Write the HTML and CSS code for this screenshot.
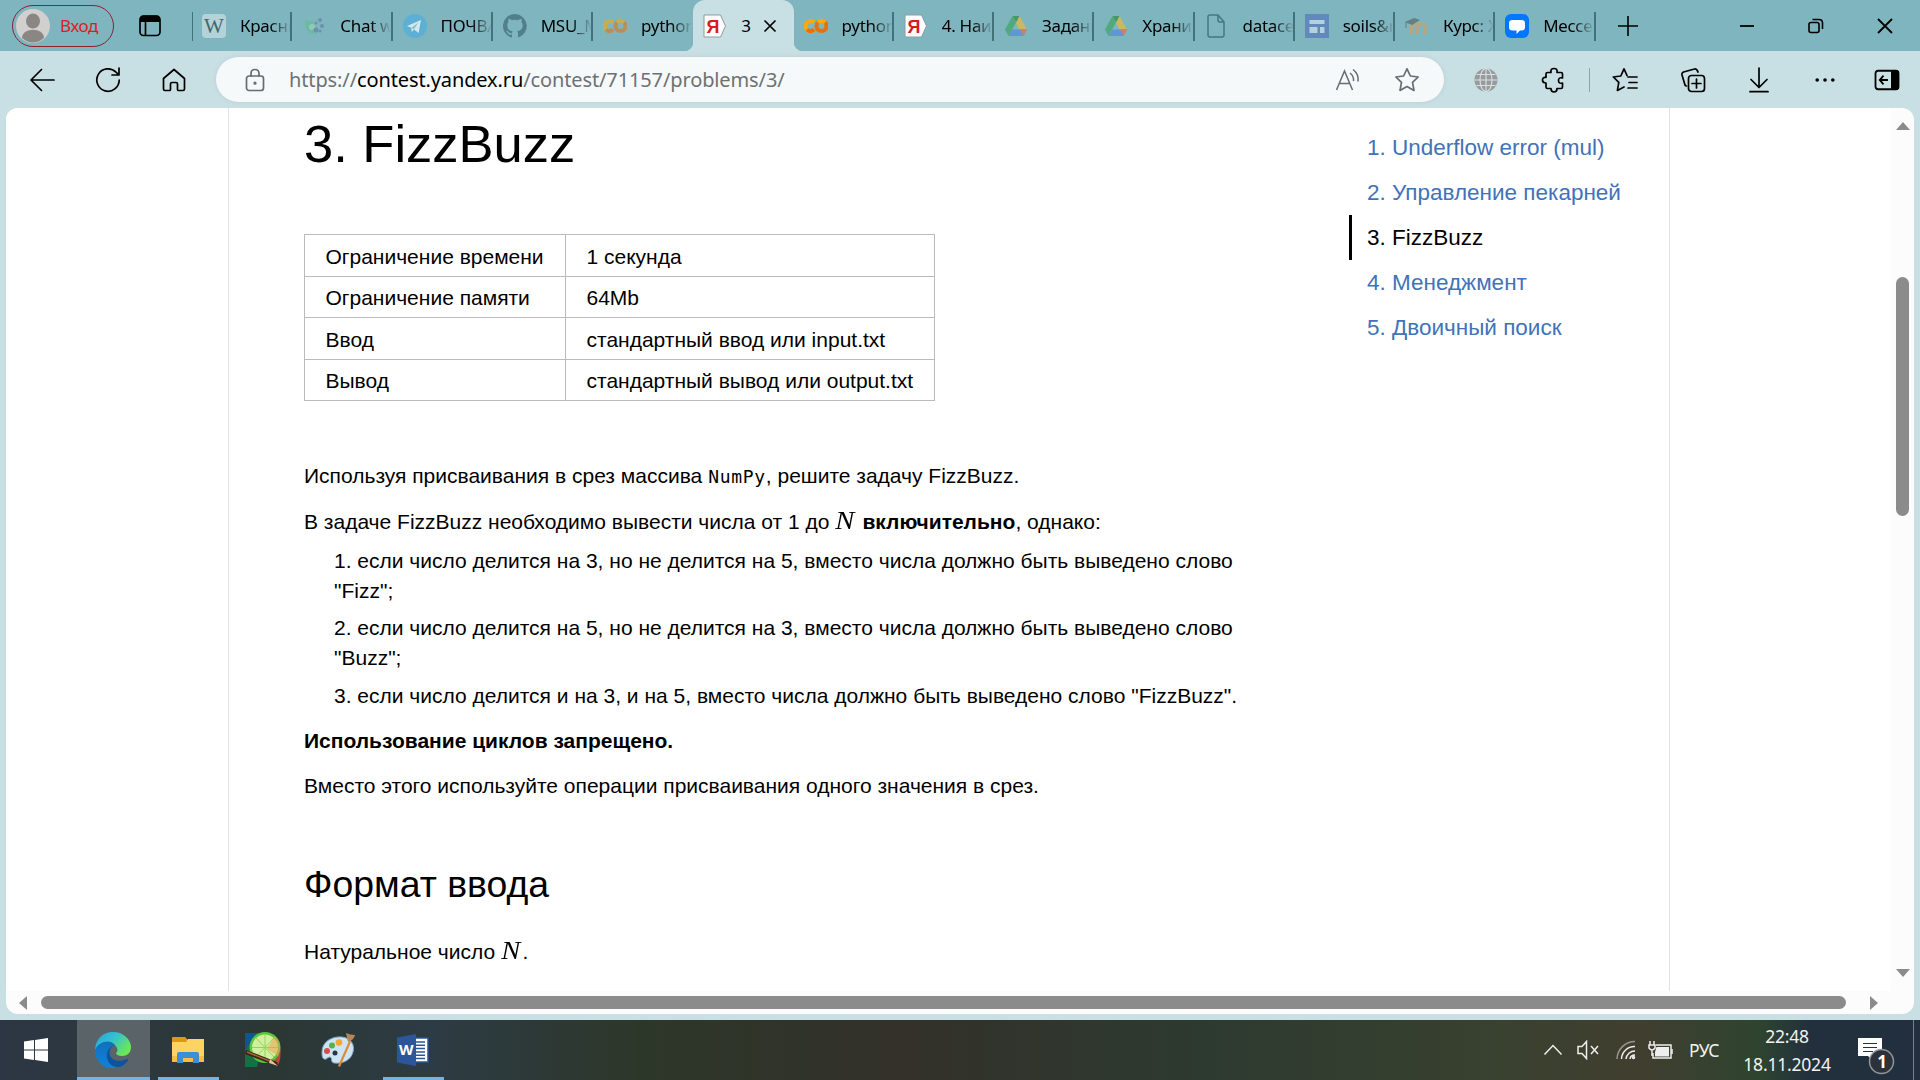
FILE: index.html
```html
<!DOCTYPE html>
<html lang="ru">
<head>
<meta charset="utf-8">
<title>3. FizzBuzz</title>
<link rel="stylesheet" href="styles.css">
</head>
<body>
<svg class="defs" width="0" height="0">
  <symbol id="colab" viewBox="0 0 24 24"><g fill="none" stroke-width="4.2"><circle cx="17.5" cy="12" r="5" stroke="#e8710a"/><path d="M10 8.2A5 5 0 1 0 10 15.8" stroke="#f9ab00"/><path d="M14 8.4a5 5 0 0 1 7 0" stroke="#f9ab00"/><path d="M3 15.6a5 5 0 0 0 7 0" stroke="#e8710a"/></g></symbol>
  <symbol id="ya" viewBox="0 0 24 24"><path d="M1 1h16.5l5 11-5 11H1z" fill="#fff" stroke="#8b9ca1"/></symbol>
  <symbol id="drive" viewBox="0 0 24 24"><path d="M8.5 2 1 15.5 4.5 22 12 8.500z" fill="#4aa773"/><path d="M8.500 2h7l7.500 13.500h-7.500z" fill="#d9b951"/><path d="M4.500 22h15L23 15.500H8.200z" fill="#5b90dc"/><path d="M19.500 22 23 15.500h-7z" fill="#d67761"/><path d="M8.500 2h7L12 8.500z" fill="#3c9261"/></symbol>
</svg>
<div class="browser">
  <header class="tabstrip">
    <div class="profile">
      <svg width="34" height="34" viewBox="0 0 34 34"><circle cx="17" cy="17" r="17" fill="#d2d0ce"/><ellipse cx="17" cy="12" rx="7" ry="7.500" fill="#8a8684"/><path d="M6 29c0-11 22-11 22 0q-11 9-22 0z" fill="#8a8684"/></svg>
      <span>Вход</span>
    </div>
    <svg class="workspace" width="24" height="24" viewBox="0 0 24 24"><rect x="2" y="2" width="20" height="19.500" rx="3.500" fill="none" stroke="#000" stroke-width="1.700"/><path d="M2 8V5q0-3.500 3.500-3.500h13Q22 1.500 22 5v3z"/><path d="M7.500 8v13" stroke="#000" stroke-width="1.700"/></svg>
    <nav class="tabs">
      <div class="tab"><svg class="ico" viewBox="0 0 24 24"><rect width="24" height="24" rx="4" fill="#b3d3d8"/><text x="12" y="19" text-anchor="middle" class="wiki">W</text></svg><span class="label">Красный</span></div>
      <div class="tab"><svg class="ico faded" viewBox="0 0 24 24"><path d="M3 5q2 2 6 2 4 1 4 6-1 6 3 6-8 3-11-3Q2 10 3 5z" fill="#5cc08c"/><circle cx="10" cy="13" r="3" fill="#a5d8b0"/><g fill="#5a77a0"><circle cx="18" cy="6" r="2"/><circle cx="20" cy="12" r="2"/><circle cx="14" cy="16" r="2.500"/><circle cx="14" cy="9" r="1.500"/><circle cx="18" cy="17" r="1.500"/></g></svg><span class="label">Chat with</span></div>
      <div class="tab"><svg class="ico" viewBox="0 0 24 24"><circle cx="12" cy="12" r="12" fill="#5bb0d4"/><path d="m4 12 14-6-2.400 13-4.600-3.600L8.700 18l-.5-4.200z" fill="#d3e7ec"/><path d="m8.300 14 7-5.500-4.300 6.700z" fill="#8ebdcc"/></svg><span class="label">ПОЧВА</span></div>
      <div class="tab"><svg class="ico" viewBox="0 0 16 16"><path fill="#52808a" d="M8 0a8 8 0 0 0-2.500 15.600c.4.1.5-.2.500-.4v-1.500c-2.200.5-2.700-.9-2.700-.9-.4-.9-.9-1.200-.9-1.200-.7-.5.1-.5.1-.5.800.1 1.200.8 1.200.8.700 1.200 1.900.9 2.300.7.1-.5.300-.9.500-1.100-1.800-.2-3.600-.9-3.600-4 0-.9.300-1.600.8-2.100-.1-.2-.4-1 .1-2.100 0 0 .7-.2 2.200.8a7.700 7.700 0 0 1 4 0c1.500-1 2.200-.8 2.200-.8.400 1.100.2 1.900.1 2.100.5.600.8 1.300.8 2.100 0 3.100-1.900 3.700-3.700 3.900.3.300.6.800.6 1.500v2.200c0 .2.100.5.600.4A8 8 0 0 0 8 0"/></svg><span class="label">MSU_ML</span></div>
      <div class="tab before"><svg class="ico faded"><use href="#colab"/></svg><span class="label">python</span></div>
      <div class="tab active"><svg class="ico" viewBox="0 0 24 24"><use href="#ya"/><text x="10" y="18.500" text-anchor="middle" class="ya">Я</text></svg><span class="label">3</span><svg class="close" width="14" height="14" viewBox="0 0 14 14"><path d="m1.500 1.500 11 11m0-11-11 11" stroke="#000" stroke-width="1.700"/></svg></div>
      <div class="tab"><svg class="ico"><use href="#colab"/></svg><span class="label">python</span></div>
      <div class="tab"><svg class="ico" viewBox="0 0 24 24"><use href="#ya"/><text x="10" y="18.500" text-anchor="middle" class="ya">Я</text></svg><span class="label">4. Наибол</span></div>
      <div class="tab"><svg class="ico soft"><use href="#drive"/></svg><span class="label">Задания</span></div>
      <div class="tab"><svg class="ico soft"><use href="#drive"/></svg><span class="label">Хранили</span></div>
      <div class="tab"><svg class="ico" viewBox="0 0 24 24"><path d="M3 3q0-2 2-2h8l6 7v13q0 2-2 2H5q-2 0-2-2zM13 1v5q0 2 2 2h4" fill="none" stroke="#47777f" stroke-width="1.500"/></svg><span class="label">datacent</span></div>
      <div class="tab"><svg class="ico" viewBox="0 0 24 24"><path d="M0 0h24v24H0z" fill="#6189be"/><path d="M4.500 6h15v4h-15zm0 7h8v6h-8zm10.500 0h4.500v6H15z" fill="#b5d2dc"/></svg><span class="label">soils&amp;mo</span></div>
      <div class="tab"><svg class="ico faded" viewBox="0 0 24 24"><path d="M6 20v-7q0-3 3-3t3 3v7m0-7q0-3 4-3t4 3v7" fill="none" stroke="#e39b4e" stroke-width="3.500"/><path d="m0 8 9-4 6 2-8 5z" fill="#4b5557"/><path d="M1 8v6" stroke="#4b5557"/></svg><span class="label">Курс: Хи</span></div>
      <div class="tab"><svg class="ico" viewBox="0 0 24 24"><rect width="24" height="24" rx="6" fill="#07f"/><path d="M7.500 6h9Q20 6 20 9v4.500q0 3-3.500 3H15L11.500 20v-3.500h-4q-3.500 0-3.500-3V9q0-3 3.500-3z" fill="#fff"/></svg><span class="label">Мессенд</span></div>
    </nav>
    <svg class="plus" width="20" height="20" viewBox="0 0 20 20"><path d="M10 0v20M0 10h20" stroke="#000" stroke-width="1.600"/></svg>
    <div class="winctl">
      <svg width="16" height="16" viewBox="0 0 16 16"><path d="M1 8h14" stroke="#000" stroke-width="1.800"/></svg>
      <svg width="16" height="16" viewBox="0 0 16 16" fill="none" stroke="#000" stroke-width="1.600"><rect x="1" y="4.500" width="10" height="10" rx="2"/><path d="M4.500 1.500H11Q14.500 1.500 14.500 5v6"/></svg>
      <svg width="16" height="16" viewBox="0 0 16 16"><path d="m1 1 14 14m0-14L1 15" stroke="#000" stroke-width="1.800"/></svg>
    </div>
  </header>
  <div class="toolbar">
    <div class="slot"><svg width="26" height="24" viewBox="0 0 26 24" class="line"><path d="M25 12H2M12.500 1.500 2 12l10.500 10.500"/></svg></div>
    <div class="slot"><svg width="26" height="26" viewBox="0 0 26 26" class="line"><path d="M24.200 13A11.200 11.200 0 1 1 21 5.200l2.500 2.300M24 1v7h-7"/></svg></div>
    <div class="slot"><svg width="24" height="24" viewBox="0 0 24 24" class="line"><path d="M1.500 10.500 12 1.500l10.500 9V21q0 1.500-1.500 1.500h-4.500q-1 0-1-1V16q0-1.500-1.500-1.500h-4Q8.500 14.500 8.500 16v5.500q0 1-1 1H3q-1.500 0-1.500-1.500z"/></svg></div>
    <div class="address">
      <svg width="20" height="24" viewBox="0 0 20 24" class="line grey"><rect x="1.500" y="8" width="17" height="14.500" rx="2.500"/><path d="M6 8V5.500q0-4 4-4t4 4V8"/><circle cx="10" cy="15.200" r=".8"/></svg>
      <span class="url">https://<b>contest.yandex.ru</b>/contest/71157/problems/3/</span>
      <svg class="read" width="26" height="24" viewBox="0 0 26 24"><path d="M1.500 22 9.500 3l8 19M4.500 15.500h10M15 5q4 3 3.500 8M18 1.500q6 4.500 5 12" fill="none" stroke="#676c6e" stroke-width="1.500"/></svg>
      <svg class="line grey" width="26" height="26" viewBox="0 0 26 26"><path d="m13 1.800 3.400 7.200 7.800 1-5.700 5.400 1.500 8-7-3.900-7 3.900 1.500-8L1.800 10l7.800-1z"/></svg>
    </div>
    <div class="slot"><svg width="24" height="24" viewBox="0 0 24 24"><circle cx="12" cy="12" r="11.500" fill="#989a9b"/><g fill="none" stroke="#d7e2e4" stroke-width="1.100"><ellipse cx="12" cy="12" rx="6" ry="11.500"/><path d="M12 .5v23M.5 12h23M2.500 6.500h19M2.500 17.500h19"/></g></svg></div>
    <div class="slot wide"><svg width="26" height="26" viewBox="0 0 26 26" class="line"><path d="M5 7q0-1.500 1.500-1.500H10q-.8-4 3-4t3 4h4q1.500 0 1.500 1.500v4q-4-1-4 2.500t4 2.500V20q0 1.500-1.500 1.500h-4q0 3.500-3 3.500t-3-3.500H6.500Q5 21.500 5 20v-4q-3.500 0-3.500-3T5 10.500z"/></svg></div>
    <i class="sep"></i>
    <div class="slot wide"><svg width="26" height="26" viewBox="0 0 26 26" class="line"><path d="M15 8.500 12 1.800 8.800 9l-7.500 1 5.500 5.400-1.400 8L12 20M16 10h9M17 15.500h8M16 21h9"/></svg></div>
    <div class="slot"><svg width="26" height="26" viewBox="0 0 26 26" class="line"><rect x="8.500" y="8.500" width="16" height="16" rx="3"/><path d="M16.500 12v9M12 16.500h9M18 5 17 3Q16 1.500 14.500 2L3.500 5Q1.500 6 2 8l3 10q.5 1 1.500 1"/></svg></div>
    <div class="slot"><svg width="20" height="26" viewBox="0 0 20 26" class="line"><path d="M10 1v19M2 12.500l8 8 8-8M1 24.700h18"/></svg></div>
    <div class="slot"><svg width="20" height="6" viewBox="0 0 20 6"><circle cx="2.200" cy="3" r="1.800"/><circle cx="10" cy="3" r="1.800"/><circle cx="17.800" cy="3" r="1.800"/></svg></div>
    <div class="slot last"><svg width="26" height="22" viewBox="0 0 26 20" preserveAspectRatio="none"><rect x="1.500" y="1.500" width="23" height="17" rx="2.500" fill="none" stroke="#000" stroke-width="1.800"/><path d="M17 1h5q3 0 3 3v12q0 3-3 3h-5z"/><path d="M14 10H6m3.500-4L5.800 10l3.700 4" fill="none" stroke="#000" stroke-width="1.800"/></svg></div>
  </div>
  <div class="view">
    <div class="viewport">
      <div class="page">
        <article class="problem">
          <h1>3. FizzBuzz</h1>
          <table class="limits">
            <tr><td>Ограничение времени</td><td>1 секунда</td></tr>
            <tr><td>Ограничение памяти</td><td>64Mb</td></tr>
            <tr><td>Ввод</td><td>стандартный ввод или input.txt</td></tr>
            <tr><td>Вывод</td><td>стандартный вывод или output.txt</td></tr>
          </table>
          <p>Используя присваивания в срез массива <code>NumPy</code>, решите задачу FizzBuzz.</p>
          <p>В задаче FizzBuzz необходимо вывести числа от 1 до <var>N</var> <strong>включительно</strong>, однако:</p>
          <ol>
            <li>1. если число делится на 3, но не делится на 5, вместо числа должно быть выведено слово<br>"Fizz";</li>
            <li>2. если число делится на 5, но не делится на 3, вместо числа должно быть выведено слово<br>"Buzz";</li>
            <li>3. если число делится и на 3, и на 5, вместо числа должно быть выведено слово "FizzBuzz".</li>
          </ol>
          <p><strong>Использование циклов запрещено.</strong></p>
          <p>Вместо этого используйте операции присваивания одного значения в срез.</p>
          <h2>Формат ввода</h2>
          <p>Натуральное число <var>N</var>.</p>
        </article>
        <aside class="problems">
          <a>1. Underflow error (mul)</a>
          <a>2. Управление пекарней</a>
          <a class="current">3. FizzBuzz</a>
          <a>4. Менеджмент</a>
          <a>5. Двоичный поиск</a>
        </aside>
      </div>
    </div>
    <div class="vbar"><i class="up"></i><i class="vthumb"></i><i class="down"></i></div>
    <div class="hbar"><i class="left"></i><i class="hthumb"></i><i class="right"></i></div>
  </div>
</div>
<footer class="taskbar">
  <div class="task start"><svg width="24" height="24" viewBox="0 0 24 24"><path d="m0 3.500 10-1.400v9.400H0zM11 2l13-2v11.500H11zM0 12.500h10v9.400L0 20.500zM11 12.500h13V24l-13-2z" fill="#fff"/></svg></div>
  <div class="task open focus"><svg width="36" height="36" viewBox="0 0 36 36"><defs><linearGradient id="eg" x1="0" y1="0" x2="1" y2=".6"><stop offset="0" stop-color="#2b9fe0"/><stop offset=".5" stop-color="#35c1cf"/><stop offset="1" stop-color="#6bea52"/></linearGradient><linearGradient id="eb" x1="0" y1="0" x2="0" y2="1"><stop offset="0" stop-color="#1070bc"/><stop offset="1" stop-color="#0f82dc"/></linearGradient></defs><path d="M0 19C0 7 8 0 18 0c11 0 18 8 18 15 0 6-4 9-9 9-4 0-6-1.500-6-3 1.500-1 2-3 1-5-4-8-17-8-22 3z" fill="url(#eg)"/><path d="M0 18C4 9 15 7 20 13c-5 1-7 5-7 9 0 6 5 11 11 11-2 2-4 3-7 3C7 36 0 28 0 18z" fill="url(#eb)"/><path d="M20 13c-3 1-5.500 4-5.500 8 0 5 5 9 13 7.500l5-1.500q1.500-.2.500 1.200C28 36 20 37 15 32 9 25 12 15 20 13z" fill="#0c53a0"/></svg></div>
  <div class="task open inset"><svg width="32" height="28" viewBox="0 0 32 28"><path d="M0 1.500Q0 1 1 1h12l3 3-2 3H0z" fill="#dc9a13"/><path d="M0 6h14l2-3h16v23H0z" fill="#fdd463"/><path d="M0 20h32v6H0z" fill="#f5bd42"/><path d="M5 27V18q0-2 2-2h18q2 0 2 2v9h-6v-5H11v5z" fill="#3c8fd4"/></svg></div>
  <div class="task"><svg width="36" height="36" viewBox="0 0 36 36"><path d="M0 1h20l-8 34H0z" fill="#137143"/><path d="M0 1h12L0 18z" fill="#0b5693"/><path d="M18 14h17q2 13-3 21z" fill="#bb4938"/><circle cx="20" cy="15.500" r="15.500" fill="#5cc53a"/><circle cx="20" cy="15.500" r="13" fill="#d2efa0"/><path d="M20 2.500v26M7 15.500h26M11 6l18 19M29 6 11 25" stroke="#8fd65a"/><path d="M30 4q8 8 3 20L22 17z" fill="#f0a050" opacity=".55"/><path d="m1 18 31 12 2 5L0 22z" fill="#3d2418"/><path d="m2 20 25 10" stroke="#a7633a" stroke-width="1.500"/><path d="m25 27 8 7-9-3z" fill="#ddc5a1"/></svg></div>
  <div class="task"><svg width="36" height="36" viewBox="0 0 36 36"><path d="M2 20C2 9 13 4 22 5c9 1 13 8 11 15-2 8-10 12-19 11-4-1-1-5-4-6-3 0-3 3-6 2-2-1-2-4-2-7z" fill="#cde4f4" stroke="#83a9c8"/><circle cx="7" cy="19" r="3" fill="#d54e4e"/><circle cx="12" cy="13.500" r="3" fill="#5cb14b"/><circle cx="19" cy="10.500" r="3.300" fill="#f0a838"/><circle cx="15" cy="21" r="2.500" fill="#263540"/><path d="m29 9 2 1-11 25-2-1z" fill="#e08a39"/><path d="M26 1q4 2 9 2-1 5-7 7z" fill="#b98556"/></svg></div>
  <div class="task open inset"><svg width="32" height="32" viewBox="0 0 32 32"><path d="M18 4h13v24H18z" fill="#fff" stroke="#2b579a" stroke-width="1.500"/><path d="M19 8h9m-9 3.300h9m-9 3.300h9m-9 3.300h9m-9 3.300h9m-9 3.300h9" stroke="#2b579a" stroke-width="1.500"/><path d="M0 3.500 19 0v32L0 28.500z" fill="#2b579a"/><text x="9.300" y="21" text-anchor="middle" class="word">W</text></svg></div>
  <div class="tray">
    <svg class="chev" width="20" height="12" viewBox="0 0 20 12"><path d="m1.500 10.500 8.500-9 8.500 9"/></svg>
    <svg class="vol" width="22" height="20" viewBox="0 0 22 20"><path d="M1 6.500h4l4.500-5v17l-4.500-5H1zM14 6l7 8m0-8-7 8"/></svg>
    <svg class="wifi" width="20" height="20" viewBox="0 0 20 20"><path d="M1 19A18 18 0 0 1 19 1.500" opacity=".5"/><path d="M5.500 19A13 13 0 0 1 19 6.500M10 19a9 9 0 0 1 9-8M14 19q.5-4 5-4"/><circle cx="17.500" cy="17.500" r="1"/></svg>
    <svg class="bat" width="25" height="18" viewBox="0 0 25 18"><path d="M8 4h15v13H5v-5"/><path d="M8.500 6H21v9.500H7V11z" fill="#eee" stroke="none"/><path d="M24 8v5M2 0v4M6 0v4M1 4h6v3Q4 11 1 7zM4 9v6"/></svg>
    <span class="lang">РУС</span>
    <div class="clock"><span>22:48</span><span>18.11.2024</span></div>
    <div class="note"><svg width="38" height="38" viewBox="0 0 38 38"><path d="M0 0h24v18h-9v5l-5-5H0z" fill="#fff"/><path d="M5 5.500h14M5 9.500h14M5 13.500h10" stroke="#253243" stroke-width="1.200"/><circle cx="23.500" cy="23.500" r="12" fill="#2b323a" stroke="#91969b"/><text x="24" y="30" text-anchor="middle" class="count">1</text></svg></div>
    <i class="desk"></i>
  </div>
</footer>
</body>
</html>
```
FILE: styles.css
```css
* { box-sizing: border-box; }
body { margin: 0; width: 1920px; height: 1080px; overflow: hidden; display: flex; flex-direction: column; background: #c8dfe3; color: #000; font-family: "Liberation Sans", Arial, sans-serif; }
svg { display: block; flex: none; }
.defs { position: absolute; }
.browser { height: 1020px; display: flex; flex-direction: column; }

.tabstrip { height: 51px; flex: none; display: flex; align-items: center; background: #7fb5bf; font-family: "Noto Sans", sans-serif; padding-left: 12px; }
.profile { width: 102px; height: 42px; border: 1.500px solid #8c2230; border-radius: 21px; display: flex; align-items: center; gap: 10px; padding-left: 3px; color: #df1c24; font-size: 17px; letter-spacing: -.4px; }
.workspace { margin-left: 24px; }
.tabs { display: flex; margin-left: 30px; height: 51px; background: linear-gradient(#44727b, #44727b) -1px 12px / 2px 29px no-repeat; }
.tab { width: 100.250px; flex: none; display: flex; align-items: center; padding-left: 10px; background: linear-gradient(#44727b, #44727b) right 12px / 2px 29px no-repeat; }
.tab.before, .tab.active { background: none; }
.tab.active { background: #c8dfe3; border-radius: 12px 12px 0 0; position: relative; }
.tab.active::before, .tab.active::after { content: ""; position: absolute; bottom: 0; width: 9px; height: 9px; }
.tab.active::before { left: -9px; background: radial-gradient(circle at 0 0, transparent 9px, #c8dfe3 9.500px); }
.tab.active::after { right: -9px; background: radial-gradient(circle at 100% 0, transparent 9px, #c8dfe3 9.500px); }
.tab.active .label { width: 22px; -webkit-mask: none; mask: none; }
.ico { width: 24px; height: 24px; }
.faded { opacity: .55; }
.soft { opacity: .85; }
.wiki { font: 21px "Liberation Serif", serif; fill: #43666d; }
.ya { font: bold 18px "Liberation Sans", sans-serif; fill: #d61d1d; }
.label { width: 50px; margin-left: 14px; overflow: hidden; white-space: nowrap; font-size: 17px; letter-spacing: -.3px; -webkit-mask: linear-gradient(90deg, #000 30px, transparent 51px); mask: linear-gradient(90deg, #000 30px, transparent 51px); }
.plus { margin-left: 22px; }
.winctl { display: flex; gap: 53px; margin-left: auto; padding-right: 27px; }

.toolbar { height: 57px; flex: none; display: flex; align-items: center; padding-left: 9px; }
.slot { width: 66px; flex: none; display: flex; justify-content: center; }
.slot.wide { width: 70px; }
.slot.last { width: 58px; }
.line { fill: none; stroke: #000; stroke-width: 1.700; stroke-linejoin: round; stroke-linecap: round; }
.line.grey { stroke: #676c6e; }
.address { width: 1228px; height: 45px; margin: 0 9px; border-radius: 23px; background: #f5f9fa; box-shadow: 0 0 4px #b7ced3; display: flex; align-items: center; padding: 0 24px 0 29px; font-family: "Noto Sans", sans-serif; font-size: 20px; color: #6d7173; }
.url { margin-left: 24px; letter-spacing: -.120px; }
.url b { font-weight: 400; color: #000; }
.read { margin: 0 33px 0 auto; }
.sep { width: 1px; height: 24px; background: #8fa3a8; }

.view { flex: none; width: 1908px; height: 906px; margin-left: 6px; border-radius: 12px; overflow: hidden; background: #fcfcfc; display: grid; grid-template: 883px 23px / 1885px 23px; }
.viewport { background: #fff; overflow: hidden; padding-left: 222px; }
.page { width: 1442px; height: 883px; border: solid #e2e2e2; border-width: 0 1px; display: flex; padding: 6px 0 0 75px; }
.problem { width: 1045px; font-size: 21px; line-height: 30px; }
h1 { margin: 0 0 60px; font-size: 52.500px; line-height: 60px; font-weight: 400; }
.limits { border-collapse: collapse; width: 631px; margin-bottom: 60px; }
.limits td { border: 1px solid #bbb; height: 41.500px; padding: 3.300px 0 0 20.500px; line-height: 30px; }
.limits td:first-child { width: 261px; }
p { margin: 0 0 15.300px; }
.limits + p { margin-bottom: 16px; }
code { font: 18px "DejaVu Sans Mono", monospace; letter-spacing: .7px; }
var { display: inline-block; margin: 0 3px 0 1px; font: italic 26px/20px "Liberation Serif", serif; transform: scaleX(1.100); }
ol { list-style: none; margin: -6.700px 0 15px; padding: 0 0 0 30px; }
li { margin-bottom: 7.500px; white-space: nowrap; }
h2 { margin: 61px 0 31px; font-size: 37.400px; line-height: 44px; font-weight: 400; }
.problems { padding-top: 11px; display: flex; flex-direction: column; }
.problems a { height: 45px; line-height: 45px; font-size: 22.500px; color: #4272b8; padding-left: 15px; border-left: 3px solid transparent; white-space: nowrap; }
.problems .current { color: #000; border-color: #000; }

.vbar, .hbar { display: flex; align-items: center; }
.vbar { flex-direction: column; padding-top: 14px; }
.up, .down { border: 7.500px solid transparent; border-top: 0; border-bottom: 8px solid #8b8b8b; }
.down { border-bottom: 0; border-top: 8px solid #8b8b8b; margin-top: 453px; }
.vthumb { width: 13px; height: 239px; margin-top: 147px; border-radius: 7px; background: #8b8b8b; }
.hbar { padding-left: 13px; }
.left, .right { border: 7.500px solid transparent; border-left: 0; border-right: 8px solid #8b8b8b; }
.right { border-right: 0; border-left: 8px solid #8b8b8b; margin-left: 24px; }
.hthumb { width: 1805px; height: 13px; margin-left: 14px; border-radius: 7px; background: #8b8b8b; }

.taskbar { height: 60px; flex: none; display: flex; background: linear-gradient(90deg, #2d3644 0, #2c383d 130px, #2b3733 280px, #2d3b45 430px, #2d3729 640px, #33312a 900px, #2d3a30 1200px, #39412f 1500px, #403e2f 1640px, #2e442f 1760px, #22303d 1810px, #222f3e 1920px); font-family: "Noto Sans", sans-serif; color: #f2f2f2; }
.task { width: 61px; margin-left: 14px; padding: 4px 2px 1px 0; border-bottom: 3px solid transparent; display: flex; align-items: center; justify-content: center; }
.task.start { width: 72px; margin: 0; padding-right: 0; }
.task.open { border-color: #76b2e3; }
.task.focus { width: 73px; margin-left: 5px; background: #5a6468; background-clip: padding-box; }
.task.focus + .task { margin-left: 8px; }
.word { font: bold 15px "Noto Sans", sans-serif; fill: #fff; }
.tray { margin-left: auto; display: flex; align-items: center; }
.tray svg { fill: none; stroke: #eee; stroke-width: 1.500; }
.tray .note svg { stroke: none; }
.vol { margin-left: 14px; }
.wifi { margin-left: 17px; }
.bat { margin-left: 12px; }
.lang { width: 40px; margin-left: 16px; font-size: 17.500px; letter-spacing: -.5px; }
.clock { width: 94px; margin-left: 11px; display: flex; flex-direction: column; align-items: center; font-size: 17.500px; line-height: 28px; letter-spacing: -.200px; }
.note { width: 38px; margin: 14px 0 0 24px; }
.count { font: bold 17px "Noto Sans", sans-serif; fill: #fff; }
.desk { width: 1px; height: 60px; background: #778088; margin: 0 6px 0 17px; }
```
